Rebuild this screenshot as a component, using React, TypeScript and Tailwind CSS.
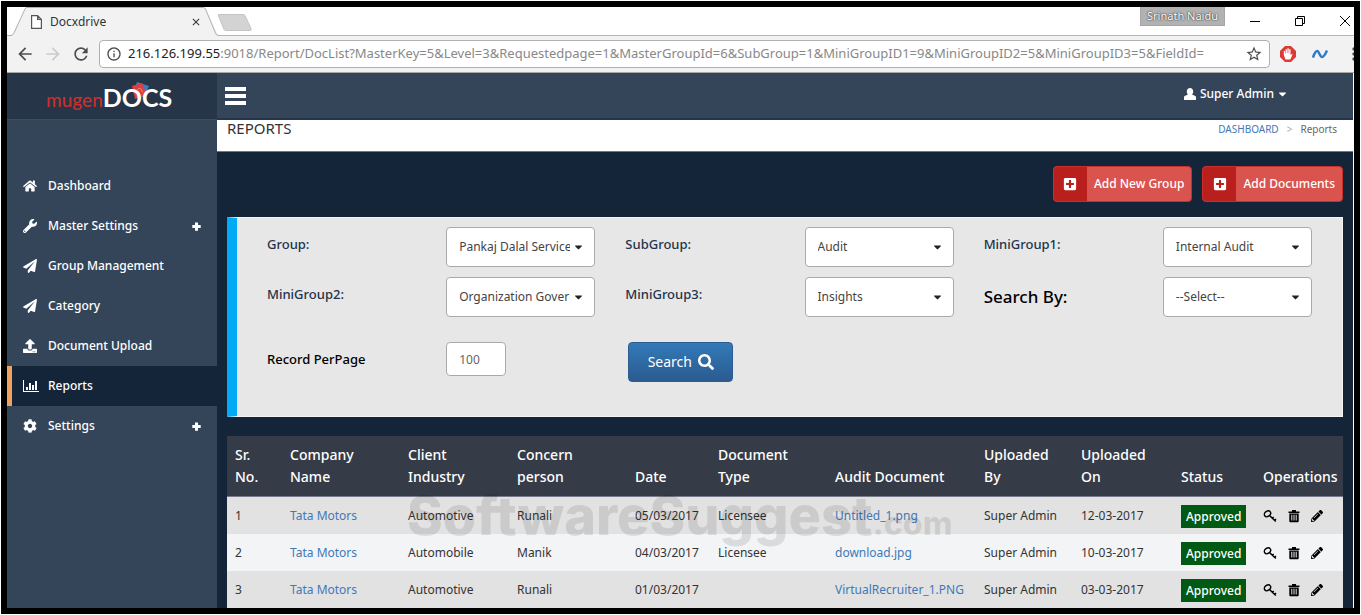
import React, { useState } from 'react';
import { FaHome, FaWrench, FaPaperPlane, FaUpload, FaCog, FaPlusSquare, FaSearch, FaCaretDown, FaPencilAlt } from 'react-icons/fa';
import { MdArrowBack, MdArrowForward, MdRefresh, MdInfoOutline, MdStarBorder, MdMoreVert, MdClose } from 'react-icons/md';

const BarChartIcon = ({ className }: { className?: string }) => (
  <svg className={className} viewBox="0 0 16 14" fill="currentColor" aria-hidden="true">
    <path d="M0 1h1v11h15v1H0zM3 8h2v3H3zM6 4h2v7H6zM9 6h2v5H9zM12 2h2v9h-2z" />
  </svg>
);

const PlusIcon = () => (
  <svg className="w-[9px] h-[9px]" viewBox="0 0 9 9" fill="currentColor" aria-hidden="true">
    <path d="M3 0.500h3V3h2.700v3H6v2.700H3V6H.3V3H3z" />
  </svg>
);

const UserIcon = () => (
  <svg className="w-3 h-3" viewBox="0 0 12 12" fill="currentColor" aria-hidden="true">
    <path d="M6 0C4.200 0 2.800 1.300 2.800 3.400c0 1.300.5 2.300 1.200 3.100L1.200 7.700C.4 8 0 8.500 0 9.300V12h12V9.300c0-.8-.4-1.300-1.200-1.600L8 6.500c.7-.8 1.200-1.800 1.200-3.100C9.200 1.300 7.800 0 6 0z" />
  </svg>
);

const KeyIcon = () => (
  <svg className="w-[14px] h-[14px]" viewBox="0 0 14 14" fill="none" stroke="currentColor" aria-hidden="true">
    <ellipse cx="4.500" cy="4.800" rx="3.400" ry="2.600" transform="rotate(-35 4.500 4.800)" strokeWidth="1.400" />
    <path d="M6.500 6.500l6.300 6M9.200 9.500l1.500-1.500M11.400 11.500l1.600-1.500" strokeWidth="1.500" />
  </svg>
);

const TrashIcon = () => (
  <svg className="w-3 h-[14px]" viewBox="0 0 12 14" fill="currentColor" aria-hidden="true">
    <path fillRule="evenodd" d="M4 1h4v1.500h3.500V4h-11V2.500H4zM1.300 4.500h9.400V12c0 .8-.5 1.300-1.300 1.300H2.600c-.8 0-1.300-.5-1.300-1.300zM3.300 5.800v5.700h1V5.800zM5.500 5.800v5.700h1V5.800zM7.700 5.800v5.700h1V5.800z" />
  </svg>
);

const menu = [
  { label: 'Dashboard', icon: FaHome },
  { label: 'Master Settings', icon: FaWrench, more: true },
  { label: 'Group Management', icon: FaPaperPlane },
  { label: 'Category', icon: FaPaperPlane },
  { label: 'Document Upload', icon: FaUpload },
  { label: 'Reports', icon: BarChartIcon, active: true },
  { label: 'Settings', icon: FaCog, more: true },
];

const filters = [
  { id: 'group', label: 'Group:', value: 'Pankaj Dalal Services' },
  { id: 'subgroup', label: 'SubGroup:', value: 'Audit' },
  { id: 'mini1', label: 'MiniGroup1:', value: 'Internal Audit' },
  { id: 'mini2', label: 'MiniGroup2:', value: 'Organization Governance' },
  { id: 'mini3', label: 'MiniGroup3:', value: 'Insights' },
  { id: 'searchby', label: 'Search By:', value: '--Select--', big: true },
];

const columns = [
  { title: ['Sr.', 'No.'], width: 'w-[55px]' },
  { title: ['Company', 'Name'], width: 'w-[118px]' },
  { title: ['Client', 'Industry'], width: 'w-[109px]' },
  { title: ['Concern', 'person'], width: 'w-[118px]' },
  { title: ['Date'], width: 'w-[83px]' },
  { title: ['Document', 'Type'], width: 'w-[117px]' },
  { title: ['Audit Document'], width: 'w-[149px]' },
  { title: ['Uploaded', 'By'], width: 'w-[97px]' },
  { title: ['Uploaded', 'On'], width: 'w-[100px]' },
  { title: ['Status'], width: 'w-[82px]' },
  { title: ['Operations'], width: 'w-[88px]' },
];

const rows = [
  { no: 1, company: 'Tata Motors', industry: 'Automotive', person: 'Runali', date: '05/03/2017', type: 'Licensee', doc: 'Untitled_1.png', by: 'Super Admin', on: '12-03-2017' },
  { no: 2, company: 'Tata Motors', industry: 'Automobile', person: 'Manik', date: '04/03/2017', type: 'Licensee', doc: 'download.jpg', by: 'Super Admin', on: '10-03-2017' },
  { no: 3, company: 'Tata Motors', industry: 'Automotive', person: 'Runali', date: '01/03/2017', type: '', doc: 'VirtualRecruiter_1.PNG', by: 'Super Admin', on: '03-03-2017' },
];

function BrowserBar() {
  return (
    <div className="bg-[#f2f2f2]">
      <div className="h-[29px] bg-white border-b border-[#b5b5b5] flex justify-between">
        <div className="flex">
          <div className="relative h-[29px] w-[211px] flex items-center pl-6 pr-4 text-xs text-[#333]">
            <svg className="absolute inset-0 w-full h-full" viewBox="0 0 211 29" preserveAspectRatio="none" aria-hidden="true">
              <path d="M0 29h5L18 1.500Q18.500.5 20 .5h176q2 0 2.500 1L211 28v1z" fill="#f2f2f2" />
              <path d="M0 28.500h4Q6 28 7 26L18 2Q18.500.5 20 .5h176q2 0 2.500 1.500l10 24q1 2.500 2.500 2.500" fill="none" stroke="#b0b0b0" />
            </svg>
            <svg className="relative w-[11px] h-[14px]" viewBox="0 0 11 14" fill="#fff" stroke="#555" strokeWidth="1.200" aria-hidden="true">
              <path d="M.6.6h6l3.800 3.800v9H.6zM6.600.6v3.800h3.800" />
            </svg>
            <span className="relative ml-2 flex-1">Docxdrive</span>
            <button className="relative" aria-label="Close tab"><MdClose className="w-3 h-3" /></button>
          </div>
          <svg className="w-[34px] h-[17px] mt-[7px]" viewBox="0 0 34 17" aria-hidden="true">
            <path d="M0 .5h25q1.500 0 2 1l6 13q.8 2-1 2H8q-1.500 0-2-1z" fill="#d3d3d3" stroke="#c4c4c4" />
          </svg>
        </div>
        <div className="flex text-black">
          <span className="h-[19px] w-[85px] mr-[25px] bg-[#b2b2b2] border border-[#a5a5a5] border-t-0 text-[11px] leading-[17px] text-center text-white [text-shadow:0_0_2px_#333,0_0_1px_#333]">Srinath Naidu</span>
          <button aria-label="Minimize" className="w-[10px] mr-[35px]">
            <svg className="w-[10px] h-[10px]" viewBox="0 0 10 10" stroke="currentColor" aria-hidden="true"><path d="M0 5.500h10" /></svg>
          </button>
          <button aria-label="Restore" className="w-[10px] mr-[35px]">
            <svg className="w-[10px] h-[10px]" viewBox="0 0 10 10" fill="none" stroke="currentColor" aria-hidden="true"><path d="M.5 2.500h7v7h-7zM2.500 2.500v-2h7v7h-2" /></svg>
          </button>
          <button aria-label="Close" className="w-[10px] mr-1">
            <svg className="w-[10px] h-[10px]" viewBox="0 0 10 10" stroke="currentColor" aria-hidden="true"><path d="M0 0l10 10M10 0L0 10" /></svg>
          </button>
        </div>
      </div>
      <div className="h-[37px] flex items-center pl-2 border-b border-[#a8a8a8] overflow-hidden text-[#4d4d4d]">
        <button aria-label="Back" className="mr-2"><MdArrowBack className="w-5 h-5" /></button>
        <button aria-label="Forward" className="mr-2 text-[#ccc]"><MdArrowForward className="w-5 h-5" /></button>
        <button aria-label="Reload" className="mr-2"><MdRefresh className="w-5 h-5" /></button>
        <div className="flex-1 min-w-0 h-[28px] flex items-center bg-white border border-[#b0b0b0] rounded-sm px-[6px] text-[13px]">
          <MdInfoOutline className="w-4 h-4 mr-[6px] shrink-0" />
          <div className="flex-1 min-w-0 whitespace-nowrap overflow-hidden text-[#888]">
            <span className="text-[#222]">216.126.199.55</span>:9018/Report/DocList?MasterKey=5&amp;Level=3&amp;Requestedpage=1&amp;MasterGroupId=6&amp;SubGroup=1&amp;MiniGroupID1=9&amp;MiniGroupID2=5&amp;MiniGroupID3=5&amp;FieldId=
          </div>
          <button aria-label="Bookmark"><MdStarBorder className="w-[18px] h-[18px]" /></button>
        </div>
        <svg className="w-4 h-4 ml-[10px]" viewBox="0 0 16 16" aria-hidden="true">
          <path d="M5 0h6l5 5v6l-5 5H5l-5-5V5z" fill="#dd3a35" />
          <path d="M5.500 13.500L3.800 9V5h1.300v2.500h.5V3.300h1.300V7h.5V2.300h1.300V7h.5V3.300h1.300v6l1-1.300 1 .5-2.200 5z" fill="#fff" />
        </svg>
        <svg className="w-4 h-3 ml-4" viewBox="0 0 16 12" fill="none" stroke="#2f7ac6" strokeWidth="2.500" aria-hidden="true">
          <path d="M1 9.500C2.500 5 4 2.800 5.500 3S8 9 10 9s3.500-3 5-6.500" />
        </svg>
        <MdMoreVert className="w-5 h-5 ml-4 -mr-[10px] shrink-0" />
      </div>
    </div>
  );
}

function Logo() {
  return (
    <a href="#" className="h-[47px] flex items-end pb-[3px] pl-[39px] bg-[#263648] border-b border-[#3c4d61] font-['Lato',sans-serif]">
      <span className="relative flex items-baseline leading-8">
        <svg className="absolute left-[84px] top-0 w-5 h-5" viewBox="0 0 20 20" aria-hidden="true">
          <path d="M7 1l12 4-5 12L3 12z" fill="#3d7fb5" />
          <path d="M2 5l10-3 5 12-12 4z" fill="#dd3f3c" />
          <path d="M7 9c2-3 6-1 5 2" fill="none" stroke="#f08a80" />
        </svg>
        <span className="relative text-[19px] font-medium text-[#c9302c]">mugen</span>
        <span className="relative text-[25px] font-bold text-white">DOCS</span>
      </span>
    </a>
  );
}

function Sidebar() {
  return (
    <aside className="w-[210px] shrink-0 bg-[#34455a]">
      <Logo />
      <nav className="pt-[46px]">
        {menu.map(({ label, icon: Icon, more, active }) => (
          <a
            key={label}
            href="#"
            className={`h-10 flex items-center pr-4 border-l-[5px] text-xs font-medium text-white ${active ? 'bg-[#14253a] border-[#f0a35e]' : 'border-transparent'}`}
          >
            <span className="w-[25px] ml-[11px] shrink-0">
              <Icon className={active ? 'w-4 h-[14px]' : 'w-[14px] h-[14px]'} />
            </span>
            <span className="flex-1">{label}</span>
            {more && <PlusIcon />}
          </a>
        ))}
      </nav>
    </aside>
  );
}

function AddButton({ children }: { children: React.ReactNode }) {
  return (
    <button className="h-9 flex items-stretch rounded-sm overflow-hidden border border-[#c9302c] bg-[#d9534f] text-white text-xs font-medium">
      <span className="w-[33px] flex items-center justify-center bg-[#b81f1d]"><FaPlusSquare className="w-[14px] h-[14px]" /></span>
      <span className="self-center px-[7px]">{children}</span>
    </button>
  );
}

function Filters() {
  const [perPage, setPerPage] = useState('100');

  return (
    <form className="mt-[15px] h-[200px] border border-[#f4f4f4] border-l-10 border-l-[#00aaf4] bg-[#e7e7e7] px-[15px] pt-[9px]" onSubmit={(e) => e.preventDefault()}>
      <div className="grid grid-cols-6 gap-y-[10px]">
        {filters.map((f) => (
          <React.Fragment key={f.id}>
            <label
              htmlFor={f.id}
              className={f.big ? 'pl-[15px] pt-[6px] text-[17px] leading-7 font-medium text-black' : 'pl-[15px] pt-[7px] text-[13px] leading-5 font-medium text-[#23344a]'}
            >
              {f.label}
            </label>
            <div className="px-[15px]">
              <div className="relative">
                <select id={f.id} className="appearance-none w-full h-10 pl-3 pr-6 rounded-sm border border-[#aaa] bg-white text-xs text-[#444]">
                  <option>{f.value}</option>
                </select>
                <FaCaretDown className="absolute right-3 top-[14px] w-[9px] h-3 text-[#222] pointer-events-none" />
              </div>
            </div>
          </React.Fragment>
        ))}
      </div>
      <div className="grid grid-cols-6 mt-[25px]">
        <label htmlFor="perpage" className="pl-[15px] pt-[7px] text-[13px] leading-5 font-medium text-black">Record PerPage</label>
        <div className="px-[15px]">
          <input
            id="perpage"
            value={perPage}
            onChange={(e) => setPerPage(e.target.value)}
            className="w-[60px] h-[34px] px-3 rounded-sm border border-[#aaa] bg-white text-xs text-[#666]"
          />
        </div>
        <div className="pl-[18px]">
          <button className="h-10 w-[105px] flex items-center justify-center gap-[6px] rounded-sm border border-[#2b5d92] bg-linear-to-b from-[#337ab7] to-[#2a5b91] text-sm text-white">
            Search <FaSearch className="w-4 h-4" />
          </button>
        </div>
      </div>
    </form>
  );
}

function DocTable() {
  return (
    <div className="relative mt-[19px]">
      <table className="w-full table-fixed border-collapse text-left">
        <thead className="bg-[#353b47] text-white text-sm leading-[22px]">
          <tr className="h-[60px] border-b border-[#777b8c]">
            {columns.map((c) => (
              <th key={c.title.join(' ')} className={`${c.width} px-2 py-2 align-bottom font-medium whitespace-nowrap`}>
                {c.title.map((line) => <span key={line} className="block">{line}</span>)}
              </th>
            ))}
          </tr>
        </thead>
        <tbody className="text-xs text-[#333] whitespace-nowrap">
          {rows.map((r) => (
            <tr key={r.no} className="h-[37px] odd:bg-[#e2e2e2] even:bg-[#f3f4f6] *:px-2 *:pt-[2px]">
              <td>{r.no}</td>
              <td><a href="#" className="text-[#3f79b7]">{r.company}</a></td>
              <td>{r.industry}</td>
              <td>{r.person}</td>
              <td>{r.date}</td>
              <td>{r.type}</td>
              <td><a href="#" className="text-[#3f79b7]">{r.doc}</a></td>
              <td>{r.by}</td>
              <td>{r.on}</td>
              <td><span className="inline-block h-[23px] px-[5px] leading-[23px] bg-[#005a14] text-white font-medium">Approved</span></td>
              <td>
                <div className="flex items-center gap-[11px] text-black">
                  <button aria-label="Permissions"><KeyIcon /></button>
                  <button aria-label="Delete"><TrashIcon /></button>
                  <button aria-label="Edit"><FaPencilAlt className="w-3 h-3" /></button>
                </div>
              </td>
            </tr>
          ))}
        </tbody>
      </table>
      <div className="absolute left-[180px] top-[50px] flex items-baseline font-['Inter',sans-serif] font-extrabold text-black/10 leading-[60px] pointer-events-none">
        <span className="text-[54px]">SoftwareSuggest</span>
        <span className="text-[32px]">.com</span>
      </div>
    </div>
  );
}

export default function App() {
  return (
    <div className="min-h-screen flex flex-col bg-white p-px font-['Noto_Sans','Open_Sans',sans-serif]">
      <div className="flex-1 flex flex-col border-6 border-black">
        <BrowserBar />
        <div className="flex-1 flex border-r border-white bg-[#14253a]">
          <Sidebar />
          <div className="flex-1 min-w-0">
            <header className="h-[47px] flex items-center justify-between pl-2 pr-[66px] bg-[#34455a] border-b-2 border-[#24364b] text-white">
              <button aria-label="Toggle menu" className="flex flex-col gap-[3px]">
                <span className="w-[21px] h-1 bg-white" />
                <span className="w-[21px] h-1 bg-white" />
                <span className="w-[21px] h-1 bg-white" />
              </button>
              <button className="flex items-center gap-1 pb-[3px] text-xs font-medium">
                <UserIcon /> Super Admin <FaCaretDown className="w-[9px] h-3" />
              </button>
            </header>
            <div className="h-8 flex items-start justify-between px-[10px] pr-4 bg-white border-b border-[#777]">
              <h1 className="text-[15px] leading-4 text-[#333]">REPORTS</h1>
              <div className="flex gap-2 text-[10px] leading-[18px] text-[#666]">
                <a href="#" className="text-[#3f79b7]">DASHBOARD</a>
                <span className="text-[#aaa]">&gt;</span>
                <span>Reports</span>
              </div>
            </div>
            <main className="px-[10px] pt-[14px]">
              <div className="flex justify-end gap-[10px]">
                <AddButton>Add New Group</AddButton>
                <AddButton>Add Documents</AddButton>
              </div>
              <Filters />
              <DocTable />
            </main>
          </div>
        </div>
      </div>
    </div>
  );
}
